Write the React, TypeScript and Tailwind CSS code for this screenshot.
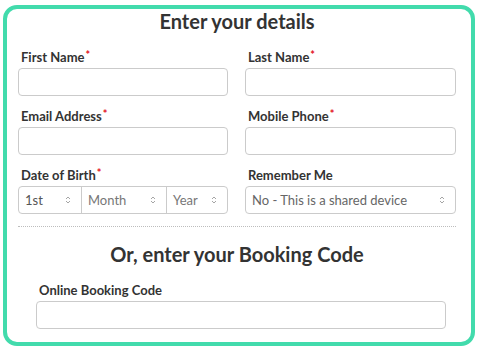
import React from "react";

const Req = () => (
  <span className="relative top-[-3px] ml-[1px] text-[11px] leading-none text-[#e3101c]">*</span>
);

const Label = ({ children, req }: { children: React.ReactNode; req?: boolean }) => (
  <div className="h-[16px] pl-[3px] text-[13px] font-bold leading-[16px] text-[#333] whitespace-nowrap">
    {children}
    {req && <Req />}
  </div>
);

const Input = () => <div className="mt-[3px] h-[28px] rounded-[4px] border border-[#cbcbcb] bg-white" />;

const Chevron = () => (
  <svg width="6" height="10" viewBox="0 0 6 10" className="shrink-0">
    <path d="M1 4 L3 2 L5 4" stroke="#a5a5a5" strokeWidth="1" fill="none" />
    <path d="M1 6 L3 8 L5 6" stroke="#a5a5a5" strokeWidth="1" fill="none" />
  </svg>
);

const SelPart = ({ text, color, className }: { text: string; color: string; className: string }) => (
  <div className={`flex h-full items-center justify-between pl-[6px] pr-[10px] ${className}`}>
    <span className="text-[13px] leading-none" style={{ color }}>
      {text}
    </span>
    <Chevron />
  </div>
);

export default function App() {
  return (
    <div
      className="relative h-[350px] w-[480px] overflow-hidden bg-white"
      style={{ fontFamily: "Lato, 'Open Sans', sans-serif" }}
    >
      <div className="ml-[3px] mt-[5px] h-[341px] w-[472px] rounded-[14px] border-4 border-[#42dbac]">
        <div className="pl-[11px] pr-[15px]">
          <h1 className="h-[24px] text-center text-[20px] font-bold leading-[24px] text-[#333]">
            Enter your details
          </h1>
          <div className="mt-[16px] grid grid-cols-[210px_211px] gap-x-[17px] gap-y-[12px]">
            <div>
              <Label req>First Name</Label>
              <Input />
            </div>
            <div>
              <Label req>Last Name</Label>
              <Input />
            </div>
            <div>
              <Label req>Email Address</Label>
              <Input />
            </div>
            <div>
              <Label req>Mobile Phone</Label>
              <Input />
            </div>
            <div>
              <Label req>Date of Birth</Label>
              <div className="mt-[3px] flex h-[28px] rounded-[4px] border border-[#cbcbcb] bg-white">
                <SelPart text="1st" color="#555" className="w-[62px]" />
                <SelPart text="Month" color="#777" className="w-[85px] border-l border-[#cbcbcb]" />
                <SelPart text="Year" color="#777" className="flex-1 border-l border-[#cbcbcb]" />
              </div>
            </div>
            <div>
              <Label>Remember Me</Label>
              <div className="mt-[3px] flex h-[28px] items-center justify-between rounded-[4px] border border-[#cbcbcb] bg-white pl-[6px] pr-[10px]">
                <span className="text-[13px] leading-none text-[#666]">No - This is a shared device</span>
                <Chevron />
              </div>
            </div>
          </div>
          <div className="mt-[12px] border-t border-dotted border-[#bdbdbd]" />
          <h2 className="mt-[15px] h-[24px] text-center text-[20px] font-bold leading-[24px] text-[#333]">
            Or, enter your Booking Code
          </h2>
          <div className="ml-[18px] mr-[10px] mt-[16px]">
            <Label>Online Booking Code</Label>
            <Input />
          </div>
        </div>
      </div>
    </div>
  );
}
